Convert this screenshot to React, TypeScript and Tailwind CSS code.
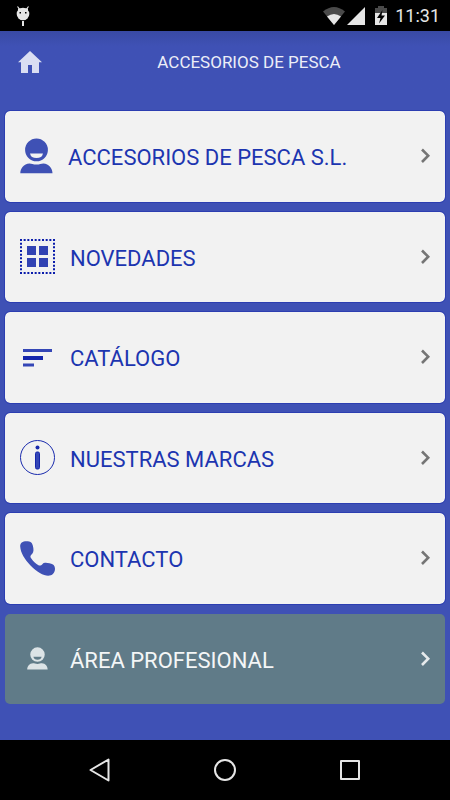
import type { ReactNode } from 'react';
import clsx from 'clsx';

interface MenuItem {
  id: string;
  label: string;
  icon: ReactNode;
  muted?: boolean;
}

function PersonIcon({ className }: { className?: string }) {
  return (
    <svg viewBox="0 0 33 36" className={className} fill="currentColor" aria-hidden="true">
      <path
        fillRule="evenodd"
        d="M16.500 0.500a11.400 11.400 0 0 1 0 22.800a11.400 11.400 0 0 1 0-22.800zM10 15.400a6.600 5.600 0 0 0 13 0z"
      />
      <path d="M0.300 35.200c0-4.600 3.400-9.800 9.200-9.800 2 0 3.600 1.100 6.900 1.100s4.900-1.100 6.900-1.100c5.800 0 9.200 5.200 9.200 9.800z" />
    </svg>
  );
}

function GridIcon() {
  return (
    <svg viewBox="0 0 35 35" className="w-[35px] h-[35px]" fill="none" aria-hidden="true">
      <g stroke="#0a1cab" strokeWidth="2" strokeDasharray="2 1.667">
        <path d="M0 1h35M0 34h35" />
        <path d="M1 3.667v29M34 3.667v29" />
      </g>
      <path d="M7 7h9v9H7zM19 7h9v9h-9zM7 19h9v9H7zM19 19h9v9h-9z" fill="#3142b3" />
    </svg>
  );
}

function SortIcon() {
  return (
    <svg viewBox="0 0 35 35" className="w-[35px] h-[35px]" aria-hidden="true">
      <path d="M3 9h29v3H3z" fill="#3446b6" />
      <path d="M3 16h20v4H3z" fill="#1526ac" />
      <path d="M3 23.500h11v3H3z" fill="#3446b6" />
    </svg>
  );
}

function InfoIcon() {
  return (
    <svg viewBox="0 0 35 35" className="w-[35px] h-[35px]" aria-hidden="true">
      <circle cx="17.500" cy="17.500" r="17" fill="none" stroke="#1a2bad" strokeWidth="1" />
      <circle cx="17.500" cy="7.500" r="2" fill="#1a2bad" />
      <rect x="15.500" y="12" width="4" height="17" rx="1.500" fill="#3446b6" stroke="#1526ac" />
    </svg>
  );
}

function PhoneIcon() {
  return (
    <svg viewBox="0 0 35 35" className="w-[35px] h-[35px]" fill="currentColor" aria-hidden="true">
      <path d="M0.200 5.500C0 2 2.500 0.300 6.500 0.300c4 0 5.500 1.200 6.300 4.300 0.900 3.300 1.200 6.600-0.700 8.300-1.800 1.600-2.300 2.600-0.800 4.700 1.800 2.700 4.300 5 6.800 6.500 1.900 1.100 3 0.300 4.500-1.200 1.400-1.400 3.900-1.200 6.900-0.600 3.800 0.700 5.500 2.400 5.500 5.500 0 4.200-2.800 7-6.900 7-4.600 0-11.500-4-17.600-10.300C4.500 18.200 0.600 11.600 0.200 5.500z" />
    </svg>
  );
}

const items: MenuItem[] = [
  { id: 'empresa', label: 'ACCESORIOS DE PESCA S.L.', icon: <PersonIcon className="w-[33px] h-9" /> },
  { id: 'novedades', label: 'NOVEDADES', icon: <GridIcon /> },
  { id: 'catalogo', label: 'CATÁLOGO', icon: <SortIcon /> },
  { id: 'marcas', label: 'NUESTRAS MARCAS', icon: <InfoIcon /> },
  { id: 'contacto', label: 'CONTACTO', icon: <PhoneIcon /> },
  {
    id: 'profesional',
    label: 'ÁREA PROFESIONAL',
    icon: (
      <span className="w-[35px] flex justify-center">
        <PersonIcon className="w-[21px] h-[23px] text-[#dce3e6]" />
      </span>
    ),
    muted: true,
  },
];

function StatusBar() {
  return (
    <div className="h-[31px] bg-black flex items-center justify-between pl-4 pr-[10px] text-[#e6e6e6]">
      {/* Debug notification */}
      <svg viewBox="0 0 14 20" className="w-[14px] h-5" aria-hidden="true">
        <path d="M1.500 0.500l3 4M12.500 0.500l-3 4" stroke="currentColor" strokeWidth="1.200" />
        <path d="M2 2.500h10v3H2z" fill="currentColor" />
        <circle cx="7" cy="8" r="6.300" fill="currentColor" />
        <path d="M3.500 6h1.500v1.500H3.500zM9 6h1.500v1.500H9z" fill="#000" />
        <path d="M6 15h2v5H6z" fill="currentColor" />
      </svg>
      <div className="flex items-center">
        <svg viewBox="0 0 22 18" className="w-[22px] h-[18px]" aria-hidden="true">
          <path d="M0 4.500Q11-4.500 22 4.500L11 18z" fill="#4a4a4a" />
          <path d="M4 9.500Q11 4.500 18 9.500L11 18z" fill="currentColor" />
        </svg>
        <svg viewBox="0 0 18 18" className="w-[18px] h-[18px] ml-[2px]" aria-hidden="true">
          <path d="M18 0v18H0z" fill="currentColor" />
        </svg>
        <svg viewBox="0 0 12 19" className="w-3 h-[19px] ml-[10px]" aria-hidden="true">
          <path d="M3 0h6v2h3v5H0V2h3z" fill="#4a4a4a" />
          <path d="M0 7h12v12H0z" fill="currentColor" />
          <path d="M7.500 4L2 12h3.500L4 17.500 10 9.500H6.500z" fill="#000" />
        </svg>
        <span className="ml-2 w-[45px] text-right text-[18px] leading-5 whitespace-nowrap">11:31</span>
      </div>
    </div>
  );
}

function Header() {
  return (
    <header className="h-[61px] flex items-center bg-linear-to-b from-[#394aa4] to-[#3f51b5] to-25% px-[18px]">
      <button type="button" aria-label="Inicio" className="shrink-0 text-[#dadef2]">
        <svg viewBox="0 0 24 22" className="w-6 h-[22px]" fill="currentColor" aria-hidden="true">
          <path d="M12 0l12 11.300h-3V22h-7v-8h-4v8H3V11.300H0z" />
        </svg>
      </button>
      <h1 className="flex-1 pl-6 text-center text-[17px] leading-6 text-[#eceef8]">ACCESORIOS DE PESCA</h1>
    </header>
  );
}

function MenuCard({ item }: { item: MenuItem }) {
  return (
    <button
      type="button"
      className={clsx(
        'w-full h-full flex items-center gap-[15px] pl-[15px] pr-[14px] rounded-[5px] text-left',
        item.muted
          ? 'bg-[#607b88] text-white'
          : 'bg-[#f2f2f2] text-[#3f51b5] outline outline-[#2c3eb1]'
      )}
    >
      <span className="shrink-0">{item.icon}</span>
      <span
        className={clsx('flex-1 pt-1 text-[22px] leading-7', item.muted ? 'text-[#f4f6f7]' : 'text-[#1c35b0]')}
      >
        {item.label}
      </span>
      <svg
        viewBox="0 0 10 16"
        className={clsx('w-[10px] h-4 shrink-0', item.muted ? 'text-[#e6eaec]' : 'text-[#757575]')}
        fill="none"
        stroke="currentColor"
        strokeWidth="2.600"
        aria-hidden="true"
      >
        <path d="M1 1.500L7.200 7.700 1 14" />
      </svg>
    </button>
  );
}

function NavBar() {
  return (
    <nav className="h-[60px] bg-black flex items-center justify-center gap-[101px] text-[#e6e6e6]">
      <button type="button" aria-label="Atrás">
        <svg viewBox="0 0 24 24" className="w-6 h-6" fill="none" stroke="currentColor" strokeWidth="2" strokeLinejoin="round" aria-hidden="true">
          <path d="M20.500 1.500v21L2.500 12z" />
        </svg>
      </button>
      <button type="button" aria-label="Inicio del dispositivo">
        <svg viewBox="0 0 24 24" className="w-6 h-6" fill="none" stroke="currentColor" strokeWidth="2" aria-hidden="true">
          <circle cx="12" cy="12" r="10" />
        </svg>
      </button>
      <button type="button" aria-label="Recientes">
        <svg viewBox="0 0 24 24" className="w-6 h-6" fill="none" stroke="currentColor" strokeWidth="2" strokeLinejoin="round" aria-hidden="true">
          <path d="M3 3h18v18H3z" />
        </svg>
      </button>
    </nav>
  );
}

export default function App() {
  return (
    <div className="min-h-screen flex flex-col bg-[#3f51b5] font-['Roboto',sans-serif]">
      <StatusBar />
      <Header />
      <main className="flex-1 flex flex-col px-[5px] pt-[19px] pb-9">
        <ul className="flex-1 grid auto-rows-fr gap-[10px]">
          {items.map((item) => (
            <li key={item.id}>
              <MenuCard item={item} />
            </li>
          ))}
        </ul>
      </main>
      <NavBar />
    </div>
  );
}
